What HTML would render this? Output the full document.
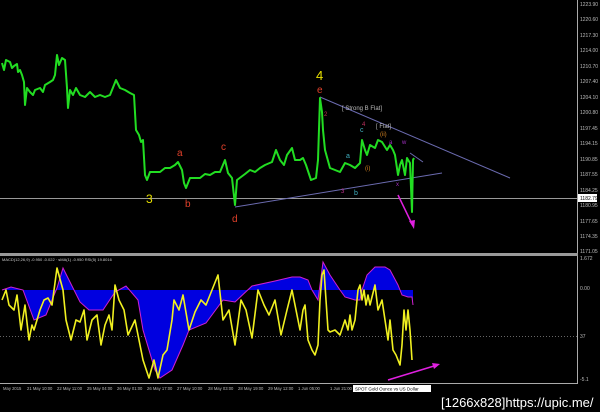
<!DOCTYPE html>
<html><head><meta charset="utf-8"><style>
html,body{margin:0;padding:0;background:#000;width:600px;height:412px;overflow:hidden}
svg{display:block}
text{font-family:"Liberation Sans",sans-serif}
</style></head><body>
<svg width="600" height="412" viewBox="0 0 600 412" xmlns="http://www.w3.org/2000/svg">
<rect width="600" height="412" fill="#000"/>
<line x1="577.5" y1="0" x2="577.5" y2="384" stroke="#aaa" stroke-width="1"/>
<rect x="0" y="253" width="578" height="3" fill="#999"/>
<line x1="0" y1="383.5" x2="578" y2="383.5" stroke="#aaa"/>
<line x1="0" y1="198.5" x2="577" y2="198.5" stroke="#999"/>
<line x1="320" y1="97" x2="510" y2="178" stroke="#6b6bb0" stroke-width="1"/>
<line x1="410" y1="153" x2="423" y2="162" stroke="#6b6bb0"/>
<line x1="235" y1="207" x2="442" y2="173" stroke="#6b6bb0"/>
<polyline fill="none" stroke="#22dd22" stroke-width="2" stroke-linejoin="round" points="2,63 4,70 6,60 10,62 12,68 14,66 17,64 18,72 20,70 22,75 24,82 25,105 27,88 30,92 33,95 35,90 40,88 43,92 45,85 50,82 53,80 55,75 57,55 59,65 62,58 65,60 67,88 68,108 70,90 73,95 76,88 80,95 85,97 90,92 95,97 100,95 105,97 110,95 114,85 116,80 120,88 125,90 130,93 134,95 136,130 139,135 141,142 143,140 145,175 147,180 150,172 160,172 165,168 170,168 175,165 178,162 182,170 184,183 186,188 190,178 200,178 205,174 210,175 215,172 220,172 225,160 228,173 232,178 235,205 237,180 245,174 250,170 255,172 260,168 265,165 272,162 276,150 280,160 284,165 287,155 292,148 295,160 300,160 303,158 306,165 311,180 316,178 318,160 320,98 322,112 323,130 325,150 330,168 335,170 340,172 345,163 350,165 355,168 360,163 362,140 365,150 367,155 370,145 375,148 378,140 382,142 387,150 390,145 393,150 395,155 398,175 400,165 402,160 405,175 407,158 410,163 412,212 413,160 414,158"/>
<text x="146" y="203" fill="#e8e000" font-size="12">3</text>
<text x="177" y="156" fill="#e0402a" font-size="10">a</text>
<text x="185" y="207" fill="#e0402a" font-size="10">b</text>
<text x="221" y="150" fill="#e0402a" font-size="10">c</text>
<text x="232" y="222" fill="#e0402a" font-size="10">d</text>
<text x="316" y="80" fill="#e8e000" font-size="13">4</text>
<text x="317" y="93" fill="#e0402a" font-size="10">e</text>
<text x="342" y="110" fill="#bbb" font-size="6">[ Strong B Flat]</text>
<text x="376" y="128" fill="#bbb" font-size="6">[ Flat]</text>
<text x="324" y="116" fill="#c03050" font-size="6">2</text>
<text x="362" y="126" fill="#c03060" font-size="6">4</text>
<text x="360" y="132" fill="#40b0c0" font-size="7">c</text>
<text x="346" y="158" fill="#40b0c0" font-size="7">a</text>
<text x="354" y="195" fill="#40b0c0" font-size="7">b</text>
<text x="341" y="193" fill="#c03090" font-size="6">3</text>
<text x="380" y="136" fill="#d08020" font-size="6">(ii)</text>
<text x="365" y="170" fill="#d08020" font-size="6">(i)</text>
<text x="389" y="144" fill="#a030c0" font-size="6">a</text>
<text x="402" y="144" fill="#a030c0" font-size="6">w</text>
<text x="396" y="186" fill="#a030c0" font-size="6">x</text>
<line x1="398" y1="195" x2="412" y2="224" stroke="#e020e0" stroke-width="1.5"/>
<polygon points="414,229 409,221 415,220" fill="#e020e0"/>
<g fill="#bbb" font-size="5">
<text x="580" y="6">1223.90</text><text x="580" y="21">1220.60</text><text x="580" y="37">1217.30</text><text x="580" y="52">1214.00</text><text x="580" y="68">1210.70</text><text x="580" y="83">1207.40</text><text x="580" y="99">1204.10</text><text x="580" y="114">1200.80</text><text x="580" y="130">1197.45</text><text x="580" y="145">1194.15</text><text x="580" y="161">1190.85</text><text x="580" y="176">1187.55</text><text x="580" y="192">1184.25</text><text x="580" y="207">1180.95</text><text x="580" y="223">1177.65</text><text x="580" y="238">1174.35</text><text x="580" y="253">1171.05</text>
<text x="580" y="260">1.672</text><text x="580" y="290">0.00</text><text x="580" y="338">37</text><text x="580" y="381">-5.1</text>
</g>
<rect x="578" y="194" width="19" height="8" fill="#fff"/>
<text x="580" y="200" fill="#000" font-size="5">1182.79</text>
<text x="2" y="261" fill="#ccc" font-size="4">MACD(12,26,9) -0.950 -0.022 · sMA(1) -0.950 RSI(5) 19.8016</text>
<line x1="0" y1="336.5" x2="577" y2="336.5" stroke="#666" stroke-dasharray="1,2"/>
<polygon fill="#0000e0" points="2,290 11,287 23,290 34,320 46,315 57,288 63,268 69,280 80,302 89,310 103,310 115,292 126,286 138,300 143,330 155,370 160,378 172,370 183,345 189,330 206,323 223,300 235,302 252,286 275,281 292,277 300,277 308,280 312,290 318,300 323,262 330,275 340,290 345,297 355,300 360,300 362,290 367,275 375,267 385,267 390,270 398,285 402,295 408,297 412,297 413,305 413,290"/>
<polyline fill="none" stroke="#d020d0" stroke-width="1" points="2,290 11,287 23,290 34,320 46,315 57,288 63,268 69,280 80,302 89,310 103,310 115,292 126,286 138,300 143,330 155,370 160,378 172,370 183,345 189,330 206,323 223,300 235,302 252,286 275,281 292,277 300,277 308,280 312,290 318,300 323,262 330,275 340,290 345,297 355,300 360,300 362,290 367,275 375,267 385,267 390,270 398,285 402,295 408,297 412,297 413,305"/>
<polyline fill="none" stroke="#f0f020" stroke-width="1.6" stroke-linejoin="round" points="2,300 6,290 9,305 14,310 17,295 21,330 25,305 29,340 32,325 34,330 40,310 44,300 48,298 52,305 57,268 63,290 66,320 71,340 76,320 80,322 84,310 87,340 92,320 97,315 101,345 105,325 109,315 112,330 115,285 119,300 124,310 128,335 135,320 143,360 149,378 154,360 158,378 163,355 167,350 172,320 174,300 179,310 183,295 189,330 195,312 201,300 206,305 212,290 218,275 223,320 229,310 235,345 241,300 246,310 252,338 258,290 264,305 269,315 275,300 281,335 287,310 292,290 298,320 300,330 303,310 305,305 308,340 312,350 315,355 318,345 320,300 322,275 324,270 326,300 328,330 330,332 335,330 340,335 345,320 348,330 350,315 352,330 355,320 358,290 360,285 362,300 364,290 366,305 368,295 370,305 375,285 378,310 382,300 385,320 388,340 390,320 393,350 396,355 400,365 402,345 404,310 406,330 408,310 410,330 412,360"/>
<line x1="388" y1="380" x2="434" y2="366" stroke="#e020e0" stroke-width="1.5"/>
<polygon points="440,364 432,363 434,369" fill="#e020e0"/>
<g fill="#bbb" font-size="4.2">
<text x="3" y="390">May 2015</text><text x="27" y="390">21 May 10:00</text><text x="57" y="390">22 May 11:00</text><text x="87" y="390">25 May 04:00</text><text x="117" y="390">26 May 01:00</text><text x="147" y="390">26 May 17:00</text><text x="177" y="390">27 May 10:00</text><text x="208" y="390">28 May 03:00</text><text x="238" y="390">28 May 19:00</text><text x="268" y="390">29 May 12:00</text><text x="298" y="390">1 Jun 05:00</text><text x="330" y="390">1 Jun 21:00</text>
</g>
<rect x="353" y="385" width="78" height="7" fill="#fff"/>
<text x="355" y="390.5" fill="#000" font-size="4.5">SPOT Gold Ounce vs US Dollar</text>
<text x="441" y="407" fill="#fff" font-size="13" font-family="Liberation Mono,monospace">[1266x828]https://upic.me/</text>
</svg>
</body></html>
